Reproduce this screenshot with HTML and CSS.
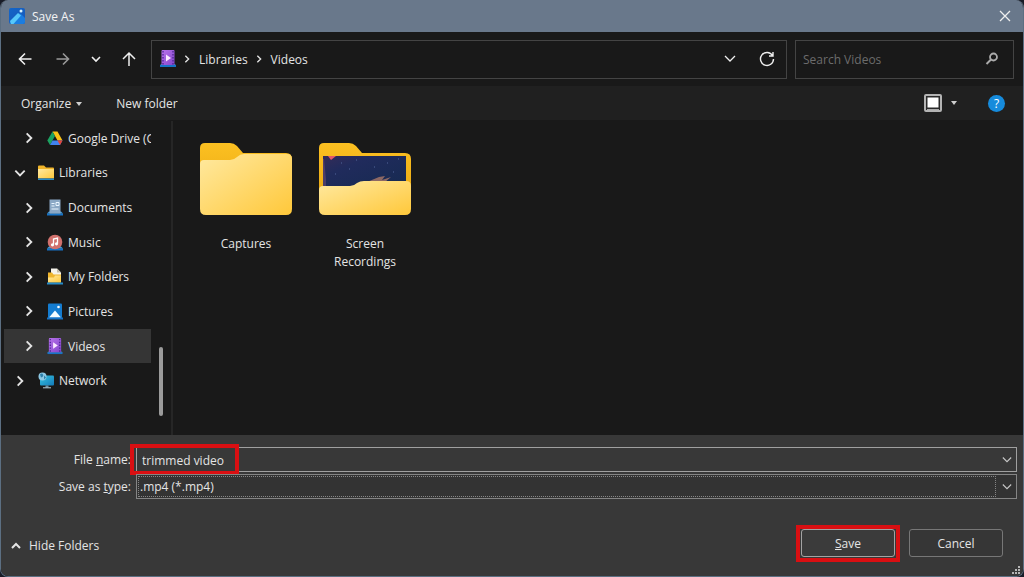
FILE: index.html
```html
<!DOCTYPE html>
<html lang="en">
<head>
<meta charset="utf-8">
<title>Save As</title>
<link rel="stylesheet" href="styles.css">
</head>
<body>
<svg class="defs" width="0" height="0" aria-hidden="true">
  <defs>
    <linearGradient id="gold" x1="0" y1="0" x2="1" y2="1"><stop offset="0" stop-color="#ffe9a0"/><stop offset="1" stop-color="#ffc83a"/></linearGradient>
    <linearGradient id="back" x1="0" y1="0" x2="0" y2="1"><stop offset="0" stop-color="#fcc021"/><stop offset="1" stop-color="#e9a914"/></linearGradient>
    <linearGradient id="night" x1="0" y1="0" x2="1" y2="1"><stop offset="0" stop-color="#342c58"/><stop offset=".3" stop-color="#202b5c"/><stop offset="1" stop-color="#152a50"/></linearGradient>
    <linearGradient id="film" x1="0" y1="0" x2="1" y2="1"><stop offset="0" stop-color="#b873ea"/><stop offset="1" stop-color="#8446cc"/></linearGradient>
    <linearGradient id="sky" x1="0" y1="0" x2="1" y2="1"><stop offset="0" stop-color="#1466c8"/><stop offset="1" stop-color="#1858b8"/></linearGradient>
    <linearGradient id="teal" x1="0" y1="0" x2="1" y2="1"><stop offset="0" stop-color="#38c4e0"/><stop offset="1" stop-color="#127aba"/></linearGradient>
  </defs>
  <symbol id="chevron-right" viewBox="0 0 10 12"><path d="M3 2l4 4-4 4" fill="none" stroke="currentColor" stroke-width="1.600"/></symbol>
  <symbol id="chevron-down" viewBox="0 0 12 12"><path d="M1 3l5 5 5-5" fill="none" stroke="currentColor" stroke-width="1.300"/></symbol>
  <symbol id="videos" viewBox="0 0 16 18">
    <path d="M0 15h16v2H0z" fill="#1673c7"/><path d="M2 14h12l2 1H0z" fill="#4aa3e4"/>
    <rect x="1.500" y="0" width="13" height="15" rx="1" fill="url(#film)"/>
    <path d="M3 1v14M13 1v14" stroke="#4b2494" stroke-width="1.300" stroke-dasharray="1.500 1.500"/>
    <path d="M6 4.500l5 3.500-5 3.500z" fill="#fbe9ff"/>
  </symbol>
</svg>

<main class="window">
  <header class="titlebar">
    <svg class="app-icon" viewBox="0 0 16 16"><rect width="16" height="16" rx="2" fill="url(#sky)"/><path d="M1 14L9 6q1.500-1 3 0l4 4v4q0 2-2 2H2q-1 0-1-2z" fill="#1b7de0"/><path d="M1 13l8-8 3 2.500L4.500 16H2z" fill="#56c8fa"/><circle cx="12" cy="3" r="1.500" fill="#d6f3ff"/></svg>
    <h1 class="title">Save As</h1>
    <button class="icon-button close" aria-label="Close"><svg width="12" height="12" viewBox="0 0 12 12"><path d="M1 1l10 10M11 1L1 11" stroke="currentColor" stroke-width="1.300"/></svg></button>
  </header>

  <nav class="navbar" aria-label="Location">
    <div class="history">
      <button class="icon-button" aria-label="Back"><svg width="14" height="14" viewBox="0 0 14 14"><path d="M13.500 7h-12M7 1.500L1.500 7 7 12.500" fill="none" stroke="currentColor" stroke-width="1.600"/></svg></button>
      <button class="icon-button muted" aria-label="Forward"><svg width="14" height="14" viewBox="0 0 14 14"><path d="M.5 7h12M7 1.500L12.500 7 7 12.500" fill="none" stroke="currentColor" stroke-width="1.600"/></svg></button>
      <button class="icon-button" aria-label="Recent locations"><svg width="12" height="12" viewBox="0 0 12 12"><path d="M2 4l4 4 4-4" fill="none" stroke="currentColor" stroke-width="1.600"/></svg></button>
      <button class="icon-button" aria-label="Up"><svg width="14" height="16" viewBox="0 0 14 16"><path d="M7 15V2M1 8l6-6 6 6" fill="none" stroke="currentColor" stroke-width="1.500"/></svg></button>
    </div>
    <div class="address">
      <svg class="videos-icon"><use href="#videos"/></svg>
      <svg class="crumb-arrow"><use href="#chevron-right"/></svg>
      <a class="crumb" href="#libraries">Libraries</a>
      <svg class="crumb-arrow"><use href="#chevron-right"/></svg>
      <a class="crumb" href="#videos-folder">Videos</a>
      <div class="address-actions">
        <button class="icon-button" aria-label="Previous locations"><svg width="12" height="12"><use href="#chevron-down"/></svg></button>
        <button class="icon-button" aria-label="Refresh"><svg width="16" height="16" viewBox="0 0 16 16"><path d="M13.500 4.500A6.500 6.500 0 1 0 14.500 8M14 1v4H10" fill="none" stroke="currentColor" stroke-width="1.400"/></svg></button>
      </div>
    </div>
    <div class="search">
      <input class="search-input" type="search" aria-label="Search Videos" placeholder="Search Videos">
      <button class="icon-button search-button" aria-label="Search"><svg width="14" height="14" viewBox="0 0 14 14"><circle cx="8.500" cy="5" r="3.500" fill="none" stroke="currentColor" stroke-width="1.800"/><path d="M6 7.500L1.500 12" stroke="currentColor" stroke-width="2"/></svg></button>
    </div>
  </nav>

  <div class="toolbar">
    <button class="text-button">Organize <span class="caret"></span></button>
    <button class="text-button">New folder</button>
    <div class="toolbar-end">
      <button class="icon-button view" aria-label="Change view"><svg width="18" height="18" viewBox="0 0 18 18"><rect x="1" y="1" width="16" height="16" rx="1" fill="#2a2a2a" stroke="#b4b4b4" stroke-width="2"/><rect x="3.500" y="3.500" width="11" height="10" fill="#fff"/><path d="M3 15.500h12" stroke="#aaa"/></svg><span class="caret"></span></button>
      <button class="help" aria-label="Help">?</button>
    </div>
  </div>

  <div class="browser">
    <aside class="sidebar">
      <ul class="tree">
        <li class="item child"><svg class="toggle"><use href="#chevron-right"/></svg><svg class="node-icon" viewBox="0 0 16 16"><path d="M5.500 1h5l5 9h-5z" fill="#fbc116"/><path d="M5.500 1L8 5.500 3 14.500.3 10z" fill="#1ca261"/><path d="M5.500 10h10L13 14.500H3z" fill="#4183f0"/><path d="M13 14.500L10.500 10h5z" fill="#e94335"/></svg><span class="name">Google Drive (G:)</span></li>
        <li class="item"><svg class="toggle open"><use href="#chevron-right"/></svg><svg class="node-icon" viewBox="0 0 16 16"><path d="M0 2q0-1 1-1h5l2 2h7q1 0 1 1v9H0z" fill="#f0b429"/><path d="M0 4.500h16V14H0z" fill="url(#gold)"/><path d="M0 14h16v1.500H0z" fill="#258bc9"/></svg><span class="name">Libraries</span></li>
        <li class="item child"><svg class="toggle"><use href="#chevron-right"/></svg><svg class="node-icon" viewBox="0 0 16 16"><path d="M0 14h16v2H0z" fill="#1673c7"/><path d="M2 12h12l2 2H0z" fill="#3f9bdc"/><rect x="2.500" y="0" width="11" height="14" fill="#8ba8c5"/><path d="M4.500 4h3M9 3h3v3H9zM4.500 6.500h3M4.500 9.500h7" fill="none" stroke="#e9f5ff"/></svg><span class="name">Documents</span></li>
        <li class="item child"><svg class="toggle"><use href="#chevron-right"/></svg><svg class="node-icon" viewBox="0 0 16 16"><path d="M0 14h16v2H0z" fill="#1673c7"/><path d="M2 12h12l2 2H0z" fill="#3f9bdc"/><circle cx="8" cy="7.500" r="7.300" fill="#d1716d"/><path d="M6.500 10V4.500l4-1V9" fill="none" stroke="#fff" stroke-width="1.300"/><circle cx="5.500" cy="10.300" r="1.600" fill="#fff"/><circle cx="9.500" cy="9.300" r="1.600" fill="#fff"/></svg><span class="name">Music</span></li>
        <li class="item child"><svg class="toggle"><use href="#chevron-right"/></svg><svg class="node-icon" viewBox="0 0 16 16"><path d="M4 0h6l4 4v9H4z" fill="#f5f3ec"/><path d="M10 0v4h4z" fill="#c5bda8"/><path d="M1 4h4l1.500 2H14v8H1z" fill="#efb52c"/><path d="M1 9h6l1-2h6v7H1z" fill="url(#gold)"/><path d="M0 14h16v2H0z" fill="#258bc9"/></svg><span class="name">My Folders</span></li>
        <li class="item child"><svg class="toggle"><use href="#chevron-right"/></svg><svg class="node-icon" viewBox="0 0 16 16"><rect x="1" width="14" height="15" rx="1" fill="#147cd0"/><path d="M2 14l6-7 6 7z" fill="#f3fbff"/><circle cx="11.500" cy="3.500" r="1.300" fill="#fff"/><path d="M0 14h16v2H0z" fill="#1673c7"/></svg><span class="name">Pictures</span></li>
        <li class="item child selected" aria-current="true"><svg class="toggle"><use href="#chevron-right"/></svg><svg class="node-icon"><use href="#videos"/></svg><span class="name">Videos</span></li>
        <li class="item"><svg class="toggle"><use href="#chevron-right"/></svg><svg class="node-icon" viewBox="0 0 16 16"><rect x="2" y="3" width="14" height="10" rx="1" fill="url(#teal)"/><path d="M7.500 13h3v2h-3z" fill="#6f93a6"/><path d="M5 15.300h8" stroke="#b6cfda"/><circle cx="4.500" cy="4" r="4" fill="#8dc8e4"/><path d="M2 2q2-2 3 0T3 5zM6 3l2 2-2 2z" fill="#2d80aa"/></svg><span class="name">Network</span></li>
      </ul>
      <div class="scrollbar"><div class="thumb"></div></div>
    </aside>
    <section class="files" aria-label="Videos">
      <figure class="folder">
        <svg class="folder-icon" viewBox="0 0 92 72"><path d="M0 5q0-5 5-5h25q4 0 7 3l6 7h43q6 0 6 6v40H0z" fill="url(#back)"/><path d="M0 21q0-4 4-4h26q4 0 7-3t7-3h43q5 0 5 5v50q0 6-6 6H6q-6 0-6-6z" fill="url(#gold)"/></svg>
        <figcaption class="folder-name">Captures</figcaption>
      </figure>
      <figure class="folder">
        <svg class="folder-icon" viewBox="0 0 92 72"><path d="M0 5q0-5 5-5h25q4 0 7 3l6 7h43q6 0 6 6v40H0z" fill="url(#back)"/><rect x="4" y="13" width="83" height="34" fill="url(#night)"/><path d="M9 13h8l-5 4z" fill="#e65868"/><path d="M48 39l12-5 6-1-3 4 9-3-6 5z" fill="#8d6864"/><path d="M22 20h1M37 17h1M30 26h1M68 20h1M79 16h1M55 24h1M16 31h1M74 29h1" stroke="#52679c"/><path d="M5 16l2 20v8H4V16z" fill="#755077" opacity=".5"/><path d="M0 47q0-4 4-4h27q4 0 7-3 3-2 7-2h42q5 0 5 5v23q0 6-6 6H6q-6 0-6-6z" fill="url(#gold)"/></svg>
        <figcaption class="folder-name">Screen Recordings</figcaption>
      </figure>
    </section>
  </div>

  <form class="footer">
    <div class="fields">
      <label class="label" for="file-name">File <u>n</u>ame:</label>
      <div class="combo">
        <input class="control" id="file-name" type="text" value="trimmed video">
        <svg class="combo-arrow"><use href="#chevron-down"/></svg>
        <span class="mark mark-name"></span>
      </div>
      <label class="label" for="file-type">Save as <u>t</u>ype:</label>
      <div class="combo type">
        <select class="control" id="file-type"><option>.mp4 (*.mp4)</option></select>
        <svg class="combo-arrow"><use href="#chevron-down"/></svg>
        <span class="focus-ring"></span>
      </div>
    </div>
    <div class="actions">
      <button class="text-button hide" type="button"><svg width="10" height="10" viewBox="0 0 10 10"><path d="M1 7l4-4 4 4" fill="none" stroke="currentColor" stroke-width="2"/></svg>Hide Folders</button>
      <div class="save-wrap"><button class="button primary" type="button"><u>S</u>ave</button><span class="mark mark-save"></span></div>
      <button class="button" type="button">Cancel</button>
    </div>
    <svg class="grip" viewBox="0 0 8 8"><path d="M6 0h2v2H6zM3 3h2v2H3zM6 3h2v2H6zM0 6h2v2H0zM3 6h2v2H3zM6 6h2v2H6z" fill="#b5b5b5"/></svg>
  </form>
</main>
</body>
</html>
```
FILE: styles.css
```css
* { box-sizing: border-box; }
body {
  margin: 0;
  background: #191c27;
  color: #e4e4e4;
  font: 12px/18px "Open Sans", "Noto Sans", sans-serif;
}
button, input, select { font: inherit; color: inherit; }
button { padding: 0; border: 0; background: none; }
svg { display: block; flex: none; }
.defs { position: absolute; }

.window {
  display: flex;
  flex-direction: column;
  min-height: 100vh;
  border: 1px solid #5c6f82;
  border-top: 0;
  border-radius: 8px;
  background: #191919;
  overflow: hidden;
}
.icon-button { display: flex; align-items: center; justify-content: center; color: #efefef; }

.titlebar {
  display: flex;
  align-items: center;
  gap: 7px;
  height: 32px;
  padding: 0 12px 0 8px;
  background: #69788b;
}
.app-icon { width: 16px; height: 16px; }
.title { margin: 0; padding-top: 2px; font-size: 12px; font-weight: 400; color: #f4f4f4; }
.close { margin-left: auto; }

.navbar {
  display: flex;
  align-items: center;
  gap: 8px;
  height: 54px;
  padding: 0 9px;
}
.history { display: flex; gap: 20px; width: 133px; padding-left: 8px; }
.muted { margin-left: 4px; color: #9a9a9a; }
.address, .search {
  display: flex;
  align-items: center;
  height: 39px;
  border: 1px solid #444;
}
.address { flex: 1; padding: 0 11px 0 8px; }
.videos-icon { width: 16px; height: 18px; margin-right: 6px; }
.crumb-arrow { width: 10px; height: 10px; margin-right: 7px; }
.crumb { margin-right: 6px; padding-top: 1px; color: inherit; text-decoration: none; }
.address-actions { display: flex; gap: 23px; margin-left: auto; }
.search { width: 219px; padding: 0 14px 0 7px; }
.search-input {
  flex: 1;
  min-width: 0;
  padding: 2px 0 0;
  border: 0;
  outline: 0;
  background: none;
}
.search-input::placeholder { color: #6c6c6c; }
.search-button { color: #aaa; }

.toolbar {
  display: flex;
  align-items: center;
  gap: 34px;
  height: 34px;
  padding: 0 18px 0 20px;
  background: #202020;
}
.text-button { display: flex; align-items: center; gap: 5px; padding-top: 2px; }
.caret {
  border: 3px solid transparent;
  border-top: 4px solid #cfcfcf;
  border-bottom: 0;
}
.toolbar-end { display: flex; align-items: center; gap: 31px; margin-left: auto; }
.view { gap: 9px; }
.help {
  width: 17px;
  height: 17px;
  border-radius: 50%;
  background: #168bdc;
  color: #fff;
  line-height: 17px;
}

.browser { display: flex; flex: 1; padding-top: 1px; }
.sidebar {
  display: flex;
  width: 172px;
  padding-left: 3px;
  border-right: 2px solid #262626;
}
.tree {
  display: grid;
  grid-template-rows: repeat(8, 1fr);
  flex: 1;
  min-width: 0;
  margin: 0;
  padding: 0 0 37px;
  list-style: none;
}
.item { display: flex; align-items: center; padding-left: 10px; overflow: hidden; }
.child { padding-left: 19px; }
.selected { background: #353535; }
.toggle { width: 12px; height: 14px; margin-right: 12px; }
.open { transform: rotate(90deg); }
.node-icon { width: 16px; height: 17px; margin-right: 5px; }
.name { padding-top: 1px; white-space: nowrap; }
.scrollbar { display: flex; flex-direction: column; justify-content: flex-end; width: 20px; padding: 0 8px 19px; }
.thumb { height: 69px; border-radius: 2px; background: #9b9b9b; }

.files { display: flex; align-items: flex-start; gap: 27px; padding: 22px 27px; }
.folder { width: 92px; margin: 0; }
.folder-icon { width: 92px; height: 72px; }
.folder-name { margin: 20px 8px 0; text-align: center; }

.footer { position: relative; padding: 12px 6px 19px 10px; background: #383838; }
.fields {
  display: grid;
  grid-template-columns: 120px 1fr;
  gap: 2px 5px;
  align-items: center;
}
.label { padding-top: 1px; text-align: right; white-space: nowrap; }
.combo { position: relative; height: 25px; border: 1px solid #a0a0a0; }
.type { border-color: #858585; background: #333; }
.control {
  display: block;
  width: 100%;
  height: 23px;
  padding: 1px 24px 0 5px;
  border: 0;
  outline: 0;
  appearance: none;
  background: none;
}
.type .control { padding-left: 3px; }
.combo-arrow {
  position: absolute;
  top: 7px;
  right: 4px;
  width: 10px;
  height: 10px;
  color: #c8c8c8;
  pointer-events: none;
}
.focus-ring {
  position: absolute;
  inset: 1px 20px 1px 1px;
  border: 1px dotted #858585;
  pointer-events: none;
}
.mark { position: absolute; border: 4px solid #d90f12; pointer-events: none; }
.mark-name { top: -4px; left: -7px; width: 109px; height: 31px; }
.mark-save { inset: -4px -5px -5px; }
.actions { display: flex; align-items: flex-end; gap: 14px; margin-top: 30px; padding-right: 14px; }
.hide { gap: 8px; margin-right: auto; padding-bottom: 2px; }
.save-wrap { position: relative; }
.button {
  display: block;
  width: 94px;
  height: 28px;
  padding-top: 1px;
  border: 1px solid #777;
  border-radius: 3px;
  background: #363636;
}
.primary { border-color: #a3a3a3; background: #3b3b3b; }
.grip { position: absolute; right: 3px; bottom: 2px; width: 8px; height: 8px; }
```
